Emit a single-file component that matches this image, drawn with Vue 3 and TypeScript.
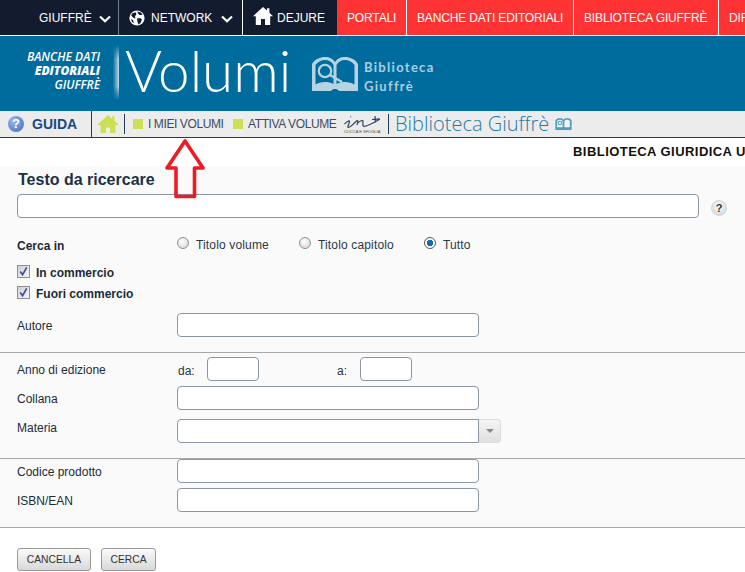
<script setup lang="ts">
const redLinks: string[] = ['PORTALI', 'BANCHE DATI EDITORIALI', 'BIBLIOTECA GIUFFRÈ', 'DIRITTO']
const radios = [
  { label: 'Titolo volume', on: false, cls: 'r1' },
  { label: 'Titolo capitolo', on: false, cls: 'r2' },
  { label: 'Tutto', on: true, cls: 'r3' },
]
</script>

<template>
  <div class="page">
    <nav class="topnav">
      <div class="dark d1"><span>GIUFFRÈ</span>
        <svg class="chev" viewBox="0 0 12 8"><path d="M1 1.500 6 6.200 11 1.500" fill="none" stroke="#fff" stroke-width="2.200" /></svg>
      </div>
      <div class="dark d2">
        <svg class="globe" viewBox="0 0 16 16">
          <circle cx="8" cy="8" r="7.600" fill="#fff" />
          <path d="M3 3.500 6.500 2.200 7.500 4 6 6.500 6.500 8.500 4.500 8 2.200 5.500ZM8.500 1.500 12 2.500 13.500 5 10.500 5 9 3.500ZM8 8.500 11 8 13 9.500 11.500 13 9.500 14.500 8.500 12ZM2 9 4 10 5 13 3 12Z" fill="#121c2e" />
        </svg>
        <span>NETWORK</span>
        <svg class="chev" viewBox="0 0 12 8"><path d="M1 1.500 6 6.200 11 1.500" fill="none" stroke="#fff" stroke-width="2.200" /></svg>
      </div>
      <div class="dark d3">
        <svg class="house" viewBox="0 0 20 18"><path d="M10 0 14 3.600V1.200H16.400V5.800L20 9.200H17.200V18H12V12H8V18H2.800V9.200H0Z" fill="#fff" /></svg>
        <span>DEJURE</span>
      </div>
      <div v-for="l in redLinks" :key="l" class="red">{{ l }}</div>
    </nav>

    <header class="brand">
      <div class="claim">
        <div>BANCHE DATI</div>
        <div class="strong">EDITORIALI</div>
        <div>GIUFFRÈ</div>
      </div>
      <div class="glow"></div>
      <div class="volumi">Volumi</div>
      <svg class="book" viewBox="0 0 46 34">
        <path d="M0 7C3 2 8 0 13 0 18 0 21 2 23 5 25 2 28 0 33 0 38 0 43 2 46 7V34H27C26 32.500 24.500 32 23 32 21.500 32 20 32.500 19 34H0Z" fill="#b4d4e3" />
        <path d="M3.500 8C6 4.500 9.500 3 13 3 17 3 20 5 21.500 8V27C19 25.500 16 25 13 25 9 25 6 26 3.500 27.500ZM24.500 8C26 5 29 3 33 3 36.500 3 40 4.500 42.500 8V27.500C40 26 37 25 33 25 30 25 27 25.500 24.500 27Z" fill="#006c9e" />
        <circle cx="13" cy="14" r="6.200" fill="none" stroke="#b4d4e3" stroke-width="2.200" />
        <path d="M18 18 30 25" stroke="#b4d4e3" stroke-width="2.400" />
      </svg>
      <div class="bibl">
        <div>Biblioteca</div>
        <div>Giuffrè</div>
      </div>
    </header>

    <div class="toolbar">
      <div class="guida">
        <span class="qmark">?</span>
        <span>GUIDA</span>
      </div>
      <svg class="homeg" viewBox="0 0 22 18"><path d="M11 0 15 3.500V1.200H17.500V5.700L22 10H18.500V18H13V12.500H9V18H3.500V10H0Z" fill="#cddf54" /></svg>
      <span class="tsep"></span>
      <span class="sq"></span><span class="tlink l1">I MIEI VOLUMI</span>
      <span class="sq"></span><span class="tlink l2">ATTIVA VOLUME</span>
      <div class="inlogo">
        <svg viewBox="0 0 38 14" class="inmark">
          <path d="M7.500 1.500 8 2M1.500 9C4 6.500 6.500 5 6.500 6.500 6.500 8.500 3.500 12.500 5.500 12.300 8 12 11 8 13.500 6 15.500 4.500 15 7 14 10M14.500 8C17 6 20 4.500 20 6.500 20 8.500 19 11.800 21.500 11.300 26 10.500 30 8 37 4M32 1 32.500 7.500M29 4.500 36.500 3.800" fill="none" stroke="#2a4565" stroke-width="1.200" />
        </svg>
        <span class="incap">CLICCA E SFOGLIA</span>
      </div>
      <span class="tsep s2"></span>
      <span class="biblink">Biblioteca Giuffrè</span>
      <svg class="minibook" viewBox="0 0 46 34">
        <path d="M0 7C3 2 8 0 13 0 18 0 21 2 23 5 25 2 28 0 33 0 38 0 43 2 46 7V34H0Z" fill="#4f9dc1" />
        <path d="M5 9C7 6 10 5 13 5 16 5 19 6 20.500 9V26H5ZM25.500 9C27 6 30 5 33 5 36 5 39 6 41 9V26H25.500Z" fill="#eef6fa" />
        <circle cx="13" cy="14" r="5" fill="none" stroke="#4f9dc1" stroke-width="3" />
      </svg>
    </div>

    <div class="crumb">BIBLIOTECA GIURIDICA UNIVERSALE</div>

    <main class="form">
      <section class="sec s-a">
        <h2 class="title">Testo da ricercare</h2>
        <div class="textrow">
          <input class="inp full" type="text" />
          <span class="help">?</span>
        </div>
        <div class="row cerca">
          <label class="lab b">Cerca in</label>
          <div class="radios">
            <label v-for="r in radios" :key="r.label" class="radio" :class="r.cls">
              <span class="dot" :class="{ on: r.on }"></span>{{ r.label }}
            </label>
          </div>
        </div>
        <label class="check c1"><span class="box"><svg viewBox="0 0 12 12"><path d="M2.500 6 5 9.500 9.500 1.500" fill="none" stroke="#3d4a9c" stroke-width="1.800" /></svg></span>In commercio</label>
        <label class="check c2"><span class="box"><svg viewBox="0 0 12 12"><path d="M2.500 6 5 9.500 9.500 1.500" fill="none" stroke="#3d4a9c" stroke-width="1.800" /></svg></span>Fuori commercio</label>
        <div class="row autore">
          <label class="lab down">Autore</label>
          <input class="inp wide" type="text" />
        </div>
      </section>

      <section class="sec s-b">
        <div class="row anno">
          <label class="lab up">Anno di edizione</label>
          <span class="da">da:</span><input class="inp small" type="text" />
          <span class="a">a:</span><input class="inp small" type="text" />
        </div>
        <div class="row collana">
          <label class="lab up">Collana</label>
          <input class="inp wide" type="text" />
        </div>
        <div class="row materia">
          <label class="lab up2">Materia</label>
          <input class="inp wide combo" type="text" />
          <span class="arrow"><i></i></span>
        </div>
      </section>

      <section class="sec s-c">
        <div class="row">
          <label class="lab down">Codice prodotto</label>
          <input class="inp wide" type="text" />
        </div>
        <div class="row isbn">
          <label class="lab down">ISBN/EAN</label>
          <input class="inp wide" type="text" />
        </div>
      </section>

      <div class="buttons">
        <button class="btn canc" type="button">CANCELLA</button>
        <button class="btn cer" type="button">CERCA</button>
      </div>
    </main>

    <svg class="redarrow" viewBox="0 0 44 64">
      <path d="M22 4 40 31H31.500V59.500H13V31H4Z" fill="none" stroke="#ed1c24" stroke-width="3.600" stroke-linejoin="round" />
    </svg>
  </div>
</template>

<style>
html, body { margin: 0; background: #fff; }
</style>

<style scoped>
.page {
  position: relative;
  width: 745px;
  height: 572px;
  overflow: hidden;
  font-family: "Liberation Sans", Arial, sans-serif;
  font-size: 12px;
  color: #1c2b3a;
  background: #fff;
}

/* top nav */
.topnav {
  display: flex;
  height: 35px;
  border-bottom: 1px solid #fff;
  white-space: nowrap;
  color: #fff;
}
.dark, .red {
  display: flex;
  align-items: center;
  flex: none;
  box-sizing: border-box;
  height: 35px;
}
.dark { background: #121c2e; }
.d1 { width: 119px; padding-left: 39px; border-right: 1px solid #6f7e93; }
.d2 { width: 124px; padding-left: 10px; border-right: 1px solid #fff; }
.d3 { width: 94px; padding-left: 10px; }
.red { background: #ff3333; padding: 0 10px; border-right: 1px solid #fff; letter-spacing: -0.15px; }
.red:nth-of-type(4) { width: 70px; }
.red:nth-of-type(5) { width: 167px; }
.red:nth-of-type(6) { width: 145px; }
.red:nth-of-type(7) { width: 100px; border-right: 0; }
.chev { width: 12px; height: 8px; margin-left: 9px; margin-top: 2px; }
.d1 .chev { margin-left: 7px; }
.globe { width: 16px; height: 16px; margin-right: 6px; }
.house { width: 20px; height: 18px; margin-right: 4px; margin-top: -3px; }

/* brand */
.brand {
  display: flex;
  height: 75px;
  background: #006c9e;
  color: #fff;
  position: relative;
}
.claim {
  width: 100px;
  padding-top: 14px;
  text-align: right;
  font: italic 600 12px/14px "Open Sans", sans-serif;
  flex: none;
  white-space: nowrap;
}
.strong { font-weight: 800; }
.glow {
  width: 6px;
  height: 55px;
  margin: 9px 0 0 13px;
  flex: none;
  background: linear-gradient(to right, rgba(255,255,255,.02), rgba(255,255,255,.75));
  -webkit-mask-image: linear-gradient(to bottom, transparent, #000 25%, #000 75%, transparent);
  mask-image: linear-gradient(to bottom, transparent, #000 25%, #000 75%, transparent);
}
.volumi {
  margin-left: 6px;
  width: 172px;
  flex: none;
  font: 300 56.500px/68px Lato, sans-serif;
  white-space: nowrap;
}
.book { width: 46px; height: 34px; flex: none; margin: 21px 0 0 15px; }
.bibl {
  margin: 22px 0 0 6px;
  font: 700 13px/19px Lato, sans-serif;
  letter-spacing: 1.300px;
  color: #a9cfe0;
}

/* toolbar */
.toolbar {
  display: flex;
  align-items: center;
  box-sizing: border-box;
  height: 27px;
  background: #ececec;
  border-bottom: 1px solid #1f3d5c;
  white-space: nowrap;
}
.guida {
  display: flex;
  align-items: center;
  box-sizing: border-box;
  width: 92px;
  height: 26px;
  padding-left: 8px;
  border-right: 1px solid #1f3d5c;
  font-weight: 700;
  font-size: 14px;
  color: #1a4a80;
}
.qmark {
  width: 16px;
  height: 16px;
  margin-right: 8px;
  border-radius: 50%;
  background: radial-gradient(circle at 35% 30%, #9db9ec, #3a68bd);
  color: #fff;
  font-size: 13px;
  line-height: 16px;
  text-align: center;
}
.homeg { width: 22px; height: 18px; margin-left: 5px; flex: none; }
.tsep { width: 1px; height: 20px; background: #1f3d5c; margin-left: 5px; flex: none; }
.sq { width: 10px; height: 10px; background: #cddf54; margin-left: 8px; flex: none; }
.tlink { margin-left: 5px; color: #3a4a68; letter-spacing: -0.4px; }
.l1 { width: 77px; }
.l2 { width: 88px; }
.inlogo { width: 38px; margin-left: 7px; flex: none; display: flex; flex-direction: column; align-items: center; }
.inmark { width: 38px; height: 14px; display: block; }
.incap { font-size: 4px; line-height: 5px; color: #444; }
.s2 { margin-left: 7px; }
.biblink {
  margin-left: 6px;
  font: 300 20px/22px "Open Sans", sans-serif;
  color: #1d7ba5;
}
.minibook { width: 17px; height: 12px; margin-left: 6px; flex: none; }

.crumb {
  height: 28px;
  box-sizing: border-box;
  padding: 6px 0 0 573px;
  font-size: 13px;
  font-weight: 700;
  line-height: 15px;
  letter-spacing: .45px;
  color: #111;
  white-space: nowrap;
  background: #fff;
}

/* form */
.form { background: #fff; }
.sec { box-sizing: border-box; background: #fafafa; border-bottom: 1px solid #a8a8a8; padding-left: 17px; }
.s-a { height: 187px; }
.s-b { height: 106px; padding-top: 4px; }
.s-c { height: 69px; }
.title {
  margin: 0;
  padding-left: 1px;
  font-size: 16px;
  line-height: 28px;
  height: 28px;
  font-weight: 700;
  color: #1a3344;
}
.textrow { display: flex; align-items: flex-start; }
.inp {
  box-sizing: border-box;
  display: block;
  height: 24px;
  padding: 0 4px;
  margin: 0;
  background: #fff;
  border: 1px solid #8a97a5;
  border-radius: 4px;
  flex: none;
  outline: 0;
}
.full { width: 682px; }
.wide { width: 302px; }
.small { width: 52px; }
.help {
  width: 16px;
  height: 16px;
  margin: 6px 0 0 12px;
  border-radius: 50%;
  background: radial-gradient(circle at 50% 40%, #fff, #ccc);
  border: 1px solid #d5d5d5;
  box-sizing: border-box;
  color: #333;
  font-size: 11px;
  font-weight: 700;
  line-height: 14px;
  text-align: center;
}
.row { display: flex; align-items: center; }
.lab { width: 160px; flex: none; }
.b { font-weight: 700; }
.cerca { margin-top: 17px; height: 20px; }
.cerca .lab { padding-top: 2px; }
.radios { display: flex; margin-top: -1px; letter-spacing: .15px; }
.radio { display: flex; align-items: center; color: #2a3644; white-space: nowrap; }
.r1 { width: 122px; }
.r2 { width: 125px; }
.dot {
  box-sizing: border-box;
  width: 12px;
  height: 12px;
  margin-right: 7px;
  margin-top: -3px;
  border-radius: 50%;
  border: 1px solid #8f8f8f;
  background: radial-gradient(circle at 40% 35%, #fff, #d0d0d0);
  flex: none;
}
.dot.on { background: radial-gradient(circle, #0f6fb0 0 3px, #fff 3.500px); border-color: #555; }
.check {
  display: flex;
  align-items: center;
  font-weight: 700;
  height: 16px;
}
.c1 { margin-top: 10px; }
.c2 { margin-top: 5px; }
.box {
  box-sizing: border-box;
  width: 13px;
  height: 13px;
  margin-right: 6px;
  margin-top: -3px;
  border: 1px solid #8f8f8f;
  background: linear-gradient(135deg, #cfd0d8, #f5f5f8);
  display: block;
}
.box svg { display: block; width: 11px; height: 11px; }
.autore { margin-top: 11px; }
.s-b .row { height: 24px; }
.collana { margin-top: 5px; }
.materia { margin-top: 9px; }
.up { padding-top: 2px; }
.up2 { padding-bottom: 6px; }
.down { padding-top: 2px; }
.da { box-sizing: border-box; width: 30px; padding: 3px 0 0 1px; flex: none; color: #2a3644; }
.a { box-sizing: border-box; width: 23px; padding-top: 3px; margin-left: 78px; flex: none; color: #2a3644; }
.combo { border-radius: 4px 0 0 4px; }
.arrow {
  box-sizing: border-box;
  width: 22px;
  height: 24px;
  display: flex;
  align-items: center;
  justify-content: center;
  border: 1px solid #dcdcdc;
  border-left: 0;
  border-radius: 0 4px 4px 0;
  background: linear-gradient(#f5f5f5, #e0e0e0);
}
.arrow i { width: 0; height: 0; border: 4px solid transparent; border-top: 4px solid #888; border-bottom: 0; }
.s-c .row { height: 24px; }
.isbn { margin-top: 5px; }
.buttons { display: flex; gap: 10px; padding: 20px 0 0 17px; }
.btn {
  box-sizing: border-box;
  height: 23px;
  padding: 0;
  border: 1px solid #999;
  border-radius: 3px;
  background: linear-gradient(#fafafa, #d9d9d9);
  font: 10.300px "Liberation Sans", sans-serif;
  color: #333;
}
.canc { width: 74px; }
.cer { width: 55px; }

.redarrow {
  position: absolute;
  left: 163px;
  top: 137px;
  width: 44px;
  height: 64px;
}
</style>
